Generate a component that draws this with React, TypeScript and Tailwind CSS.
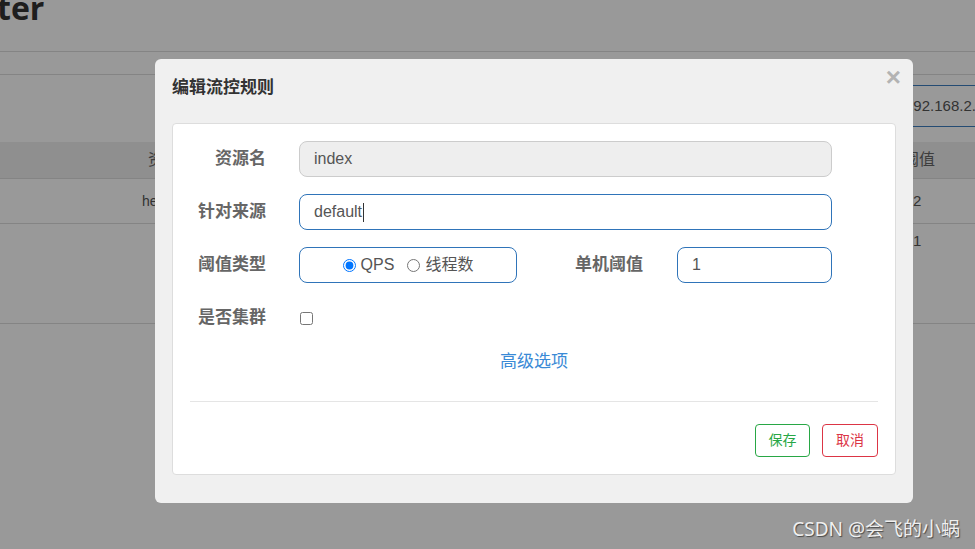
import React from 'react';

const cjk = "font-['Liberation_Sans','Noto_Sans_CJK_SC',sans-serif]";

function FormLabel({ children, width = 'w-[93px]' }: { children: React.ReactNode; width?: string }) {
  return (
    <label className={`${width} shrink-0 text-right text-[17px] font-bold text-[#666] leading-[24px]`}>
      {children}
    </label>
  );
}

export default function App() {
  return (
    <div className={`relative w-[975px] h-[549px] overflow-hidden bg-white ${cjk}`}>
      {/* Page behind the dialog */}
      <div className="h-[52px] border-b border-[#dddddd] overflow-hidden">
        <div className="-mt-[14px] -ml-[3px] text-[32px] font-bold text-[#333] leading-[44px] font-['Open_Sans',sans-serif]">
          ter
        </div>
      </div>
      <div className="h-[23px] border-b border-[#dddddd]" />
      <div className="h-[67px] flex justify-end items-start pt-[10px]">
        <div className="w-[85px] h-[42px] border border-r-0 border-[#3c7dc0] rounded-l-[4px] flex items-center pl-[14px] text-[15px] text-[#555] whitespace-nowrap overflow-hidden">
          192.168.2.15
        </div>
      </div>
      <div className="h-[37px] bg-[#eeeeee] border-b border-[#dddddd] flex items-center text-[16px] text-[#666]">
        <span className="ml-[148px]">资源名</span>
        <span className="ml-auto mr-[38px] w-[34px]">阈值</span>
      </div>
      <div className="h-[45px] border-b border-[#dddddd] flex items-center text-[14px] text-[#555]">
        <span className="ml-[142px]">hello</span>
        <span className="ml-auto mr-[46px] w-[16px] text-[15px]">2</span>
      </div>
      <div className="h-[100px] border-b border-[#dddddd] flex items-start pt-[6px] text-[15px] leading-[22px] text-[#555]">
        <span className="ml-auto mr-[46px] w-[16px]">1</span>
      </div>

      {/* Backdrop */}
      <div className="absolute inset-0 bg-black/40" />

      {/* Dialog */}
      <div className="absolute left-[155px] top-[59px] w-[758px] h-[444px] bg-[#f0f0f0] rounded-[6px] flex flex-col">
        <div className="h-[64px] shrink-0 flex items-start justify-between pl-[17px] pr-[12px] pt-[17px]">
          <h4 className="text-[17px] font-bold text-[#333] leading-[24px]">编辑流控规则</h4>
          <span className="-mt-[16px] text-[26px] font-bold text-[#b3b3b3] leading-[34px] font-['Liberation_Sans',sans-serif]">×</span>
        </div>

        <div className="mx-[17px] h-[352px] bg-white border border-[#dddddd] rounded-[4px] flex flex-col">
          <div className="pt-[17px] flex flex-col gap-[17px]">
            <div className="h-[36px] flex items-center">
              <FormLabel>资源名</FormLabel>
              <div className="ml-[33px] w-[533px] h-[36px] bg-[#eeeeee] border border-[#cccccc] rounded-[8px] flex items-center px-[14px] text-[16px] text-[#555]">
                index
              </div>
            </div>

            <div className="h-[36px] flex items-center">
              <FormLabel>针对来源</FormLabel>
              <div className="ml-[33px] w-[533px] h-[36px] bg-white border border-[#2f74b9] rounded-[8px] flex items-center px-[14px] text-[16px] text-[#555]">
                default
                <span className="w-px h-[19px] bg-[#333] ml-px" />
              </div>
            </div>

            <div className="h-[36px] flex items-center">
              <FormLabel>阈值类型</FormLabel>
              <div className="ml-[33px] w-[218px] h-[36px] bg-white border border-[#2f74b9] rounded-[8px] flex items-center justify-center text-[16px] text-[#555]">
                <label className="flex items-center gap-[5px]">
                  <input type="radio" name="grade" defaultChecked className="m-0 w-[13px] h-[13px]" />
                  QPS
                </label>
                <label className="flex items-center gap-[5px] ml-[13px]">
                  <input type="radio" name="grade" className="m-0 w-[13px] h-[13px]" />
                  线程数
                </label>
              </div>
              <FormLabel width="w-[126px]">单机阈值</FormLabel>
              <div className="ml-[34px] w-[155px] h-[36px] bg-white border border-[#2f74b9] rounded-[8px] flex items-center px-[14px] text-[16px] text-[#555]">
                1
              </div>
            </div>

            <div className="h-[36px] flex items-center">
              <FormLabel>是否集群</FormLabel>
              <input type="checkbox" className="ml-[34px] m-0 w-[13px] h-[13px]" />
            </div>
          </div>

          <div className="mt-[14px] text-center text-[17px] leading-[24px] text-[#3a8ad6]">高级选项</div>

          <div className="mt-[27px] mx-[17px] h-px bg-[#e5e5e5]" />

          <div className="mt-[22px] pr-[17px] flex justify-end gap-[12px]">
            <button className="w-[55px] h-[33px] border border-[#28a745] rounded-[4px] text-[14px] text-[#28a745] bg-white">
              保存
            </button>
            <button className="w-[56px] h-[33px] border border-[#dc3545] rounded-[4px] text-[14px] text-[#dc3545] bg-white">
              取消
            </button>
          </div>
        </div>
      </div>

      {/* Watermark */}
      <div className="absolute right-[15px] bottom-[6px] text-[19px] text-[#efefef] font-['Noto_Sans','Noto_Sans_CJK_SC',sans-serif] [text-shadow:1px_1px_1px_#4a4a4a]">
        CSDN @会飞的小蜗
      </div>
    </div>
  );
}
